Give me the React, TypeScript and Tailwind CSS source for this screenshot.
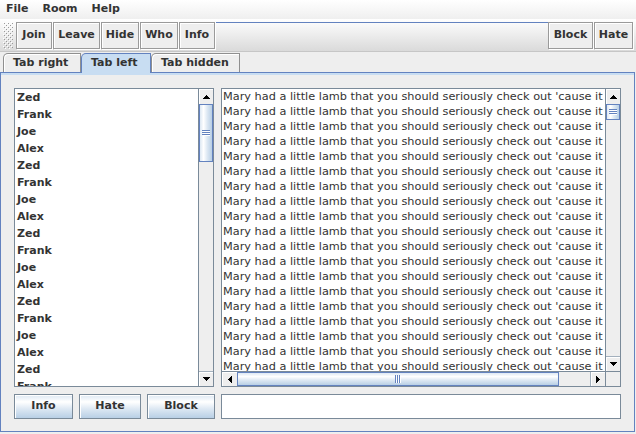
import React from "react"

const NAMES = ["Zed", "Frank", "Joe", "Alex"]
const LINE =
  "Mary had a little lamb that you should seriously check out 'cause it is totally worth it"

const rows = Array.from({ length: 18 }, (_, i) => NAMES[i % 4])
const lines = Array.from({ length: 20 }, () => LINE)

const thumbV =
  "bg-[linear-gradient(to_right,#dde8f3_0%,#ffffff_30%,#dde8f3_60%,#b8cfe5_100%)]"
const thumbH =
  "bg-[linear-gradient(to_bottom,#dde8f3_0%,#ffffff_30%,#dde8f3_60%,#b8cfe5_100%)]"

function Grip() {
  return (
    <svg width="10" height="27" className="shrink-0">
      <defs>
        <pattern id="bumps" width="4" height="4" patternUnits="userSpaceOnUse">
          <rect x="0" y="0" width="1" height="1" fill="#ffffff" />
          <rect x="1" y="1" width="1" height="1" fill="#9a9a9a" />
          <rect x="2" y="2" width="1" height="1" fill="#ffffff" />
          <rect x="3" y="3" width="1" height="1" fill="#9a9a9a" />
        </pattern>
      </defs>
      <rect width="10" height="27" fill="url(#bumps)" />
    </svg>
  )
}

function Arrow({ dir }: { dir: "up" | "down" | "left" | "right" }) {
  const vertical = dir === "up" || dir === "down"
  const cells = [0, 1, 2, 3].map((i) => {
    const k = dir === "up" || dir === "left" ? i : 3 - i
    return vertical ? (
      <rect key={i} x={3 - k} y={i} width={2 * k + 1} height={1} fill="#000" />
    ) : (
      <rect key={i} x={i} y={3 - k} width={1} height={2 * k + 1} fill="#000" />
    )
  })
  return (
    <svg width={vertical ? 7 : 4} height={vertical ? 4 : 7} shapeRendering="crispEdges">
      {cells}
    </svg>
  )
}

function ArrowBtn({ dir, className = "" }: { dir: "up" | "down" | "left" | "right"; className?: string }) {
  return (
    <div
      className={`shrink-0 flex items-center justify-center bg-[#eeeeee] shadow-[inset_1px_1px_0_#ffffff] ${className}`}
    >
      <Arrow dir={dir} />
    </div>
  )
}

function GripLines({ horizontal = false, size = 9 }: { horizontal?: boolean; size?: number }) {
  // horizontal=true: lines run horizontally (on a vertical thumb)
  const bars = [0, 2, 4]
  return horizontal ? (
    <svg width={size} height="6" shapeRendering="crispEdges">
      {bars.map((y) => (
        <g key={y}>
          <rect x="0" y={y} width={size} height="1" fill="#6382bf" />
          <rect x="1" y={y + 1} width={size} height="1" fill="#ffffff" />
        </g>
      ))}
    </svg>
  ) : (
    <svg width="6" height={size} shapeRendering="crispEdges">
      {bars.map((x) => (
        <g key={x}>
          <rect x={x} y="0" width="1" height={size} fill="#6382bf" />
          <rect x={x + 1} y="1" width="1" height={size} fill="#ffffff" />
        </g>
      ))}
    </svg>
  )
}

function ToolButton({ label, w, className = "" }: { label: string; w: string; className?: string }) {
  return (
    <div
      className={`${w} h-[27px] shrink-0 flex items-center justify-center border border-[#9a9a9a] bg-[#eeeeee] shadow-[1px_1px_0_#ffffff,inset_1px_1px_0_#ffffff] text-[11px] font-bold ${className}`}
    >
      {label}
    </div>
  )
}

function Tab({ label, w, selected = false }: { label: string; w: string; selected?: boolean }) {
  return (
    <div
      className={`${w} shrink-0 flex items-center pl-[9px] rounded-tl-[5px] border border-b-0 text-[11px] font-bold ${
        selected
          ? "h-[20px] -mb-px relative z-10 bg-[#c8ddf2] border-[#6382bf]"
          : "h-[19px] bg-[#eeeeee] border-[#8f8f8f] shadow-[inset_1px_1px_0_#ffffff]"
      }`}
    >
      {label}
    </div>
  )
}

function Button({ label, w }: { label: string; w: string }) {
  return (
    <div
      className={`${w} h-[25px] flex items-center justify-center border border-[#7a8a99] ${thumbH} shadow-[inset_1px_1px_0_#ffffff] text-[11px] font-bold`}
    >
      {label}
    </div>
  )
}

export default function App() {
  return (
    <div className="w-[636px] h-[434px] overflow-hidden bg-[#eeeeee] text-[#333333] font-['DejaVu_Sans',sans-serif]">
      {/* Menu bar */}
      <div className="h-[19px] flex items-center gap-[14px] pl-[6px] text-[11px] font-bold bg-gradient-to-b from-white to-[#efefef]">
        <span>File</span>
        <span>Room</span>
        <span>Help</span>
      </div>

      {/* Tool bar */}
      <div className="h-[33px] flex items-start pt-[3px] pl-[3px] pr-[3px] border-b border-[#c6c6c6] bg-gradient-to-b from-white to-[#dadada]">
        <Grip />
        <ToolButton label="Join" w="w-[36px]" className="ml-[3px]" />
        <ToolButton label="Leave" w="w-[47px]" className="ml-px" />
        <ToolButton label="Hide" w="w-[38px]" className="ml-px" />
        <ToolButton label="Who" w="w-[38px]" className="ml-px" />
        <ToolButton label="Info" w="w-[36px]" className="ml-px" />
        <div className="flex-1 ml-px h-[27px] border-t border-[#6382bf]" />
        <ToolButton label="Block" w="w-[45px]" />
        <ToolButton label="Hate" w="w-[39px]" className="ml-px" />
      </div>

      {/* Tabs */}
      <div className="h-[20px] flex items-end pl-[3px]">
        <Tab label="Tab right" w="w-[78px]" />
        <Tab label="Tab left" w="w-[70px]" selected />
        <Tab label="Tab hidden" w="w-[89px]" />
      </div>

      {/* Tab content */}
      <div className="w-[635px] h-[360px] border border-[#6382bf]">
        <div className="h-full border-t-2 border-[#c8ddf2] pt-[13px] pl-[13px]">
          <div className="flex">
            {/* Name list */}
            <div className="w-[200px] h-[299px] flex border border-[#7a8a99] bg-white">
              <div className="flex-1 overflow-hidden text-[11px] font-bold">
                {rows.map((n, i) => (
                  <div key={i} className="h-[17px] leading-[17px] pl-[2px]">
                    {n}
                  </div>
                ))}
              </div>
              <div className="w-[15px] flex flex-col border-l border-[#7a8a99] bg-[#eeeeee]">
                <ArrowBtn dir="up" className="h-[15px]" />
                <div
                  className={`h-[58px] flex items-center justify-center border border-[#6382bf] ${thumbV}`}
                >
                  <GripLines horizontal size={8} />
                </div>
                <div className="flex-1" />
                <ArrowBtn dir="down" className="h-[15px] border-t border-[#a3b0bd]" />
              </div>
            </div>

            {/* Chat text */}
            <div className="ml-[7px] w-[400px] h-[299px] grid grid-cols-[1fr_15px] grid-rows-[1fr_15px] border border-[#7a8a99] bg-white">
              <div className="overflow-hidden whitespace-nowrap pl-px text-[11.3px] leading-[15px]">
                {lines.map((l, i) => (
                  <div key={i}>{l}</div>
                ))}
              </div>
              <div className="flex flex-col border-l border-[#7a8a99] bg-[#eeeeee]">
                <ArrowBtn dir="up" className="h-[15px]" />
                <div
                  className={`h-[16px] flex items-center justify-center border border-[#6382bf] ${thumbV}`}
                >
                  <GripLines horizontal size={8} />
                </div>
                <div className="flex-1" />
                <ArrowBtn dir="down" className="h-[15px] border-t border-[#a3b0bd]" />
              </div>
              <div className="flex border-t border-[#7a8a99] bg-[#eeeeee]">
                <ArrowBtn dir="left" className="w-[15px]" />
                <div
                  className={`w-[322px] flex items-center justify-center border border-[#6382bf] ${thumbH}`}
                >
                  <GripLines size={8} />
                </div>
                <div className="flex-1" />
                <ArrowBtn dir="right" className="w-[15px] border-l border-[#a3b0bd]" />
              </div>
              <div className="bg-[#eeeeee] border-t border-l border-[#7a8a99]" />
            </div>
          </div>

          {/* Bottom row */}
          <div className="flex mt-[7px]">
            <div className="flex gap-[6px]">
              <Button label="Info" w="w-[59px]" />
              <Button label="Hate" w="w-[62px]" />
              <Button label="Block" w="w-[68px]" />
            </div>
            <div className="ml-[6px] w-[400px] h-[25px] bg-white border border-[#7a8a99]" />
          </div>
        </div>
      </div>
    </div>
  )
}
